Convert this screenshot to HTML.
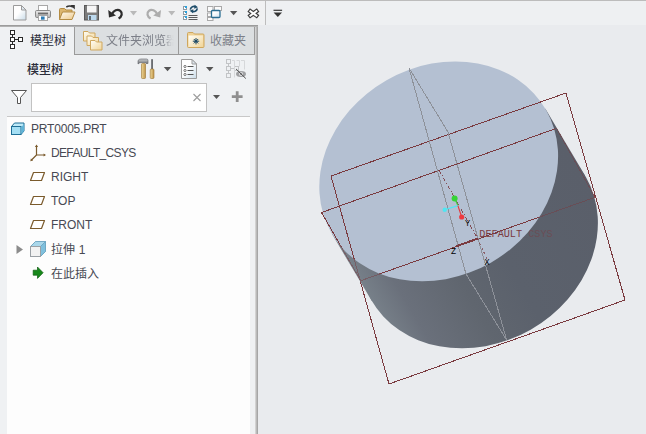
<!DOCTYPE html>
<html lang="zh-CN">
<head>
<meta charset="utf-8">
<title>PRT0005</title>
<style>
html,body{margin:0;padding:0;}
body{width:646px;height:434px;overflow:hidden;background:#e9ebee;font-family:"Liberation Sans","Noto Sans CJK SC",sans-serif;}
#app{position:relative;width:646px;height:434px;overflow:hidden;background:#e9ebee;}
.abs{position:absolute;}
#topline{left:0;top:0;width:646px;height:1px;background:#bcbcbc;}
#toolbar{left:0;top:1px;width:265px;height:24px;background:#f0f1f2;}
#tbsep{left:265px;top:1px;width:1px;height:24px;background:#bdbdbd;}
#tbright{left:266px;top:1px;width:380px;height:24px;background:#eef0f2;}
#panel{left:0;top:25px;width:258px;height:409px;background:#eff1f3;}
#paneltop{left:0;top:25px;width:258px;height:2px;background:linear-gradient(#9c9c9c 0 1px,#b2b2b2 1px 2px);}
#tab1{left:0;top:27px;width:74px;height:28px;background:#eff1f3;}
.tabi{top:27px;height:27px;background:#dcdfe1;border-left:1px solid #9a9a9a;border-bottom:1px solid #9a9a9a;}
#tab2{left:74px;width:103px;}
#tab3{left:178px;width:75px;}
#split1{left:254px;top:27px;width:1px;height:28px;background:#9c9c9c;}
#split2{left:255px;top:27px;width:2px;height:407px;background:linear-gradient(to right,#d2d2d2 0 1px,#bababa 1px 2px);}
#split3{left:257px;top:27px;width:1px;height:407px;background:#a6a6a6;}
.tabtxt{font-size:12px;line-height:16px;white-space:nowrap;}
#search{left:31px;top:83px;width:174px;height:27px;background:#fff;border:1px solid #c2c2c2;}
#tree{left:7px;top:116px;width:243px;height:318px;background:#fdfdfd;border-top:1px solid #c8c8c8;}
.row{position:absolute;left:0;height:24px;font-size:12px;line-height:24px;color:#474953;white-space:nowrap;}
svg{position:absolute;overflow:visible;}
</style>
</head>
<body>
<div id="app">
  <div id="tbright" class="abs"></div>
  <div id="toolbar" class="abs"></div>
  <div id="topline" class="abs"></div>
  <div id="tbsep" class="abs"></div>
  <div id="panel" class="abs"></div>
  <div id="paneltop" class="abs"></div>
  <div id="tab1" class="abs"></div>
  <div id="tab2" class="abs tabi"></div>
  <div id="tab3" class="abs tabi"></div>
  <div id="split1" class="abs"></div>
  <div id="split2" class="abs"></div>
  <div id="split3" class="abs"></div>
  <div class="abs tabtxt" style="left:30px;top:33px;color:#2b2d3a;">模型树</div>
  <div class="abs tabtxt" style="left:106px;top:33px;color:#7c7f88;width:68px;overflow:hidden;-webkit-mask-image:linear-gradient(to right,#000 60px,rgba(0,0,0,0.25) 63px,transparent 68px);mask-image:linear-gradient(to right,#000 60px,rgba(0,0,0,0.25) 63px,transparent 68px);">文件夹浏览器</div>
  <div class="abs tabtxt" style="left:210px;top:33px;color:#7c7f88;">收藏夹</div>
  <div class="abs tabtxt" style="left:27px;top:62px;color:#2b2d3a;font-weight:500;font-size:12px;">模型树</div>
  <div id="search" class="abs"></div>
  <div id="tree" class="abs"></div>
  <div class="row" style="left:31px;top:117px;letter-spacing:-0.2px;">PRT0005.PRT</div>
  <div class="row" style="left:51px;top:141px;letter-spacing:-0.65px;">DEFAULT_CSYS</div>
  <div class="row" style="left:51px;top:165px;">RIGHT</div>
  <div class="row" style="left:51px;top:189px;">TOP</div>
  <div class="row" style="left:51px;top:213px;">FRONT</div>
  <div class="row" style="left:51px;top:238px;word-spacing:0.5px;">拉伸 1</div>
  <div class="row" style="left:51px;top:262px;">在此插入</div>

  <!-- icons overlay -->
  <svg id="icons" class="abs" style="left:0;top:0;" width="646" height="434" viewBox="0 0 646 434">
    <defs>
      <linearGradient id="gdoc" x1="0" y1="0" x2="1" y2="1"><stop offset="0.45" stop-color="#ffffff"/><stop offset="1" stop-color="#c9dbe8"/></linearGradient>
      <linearGradient id="gprn" x1="0" y1="0" x2="0" y2="1"><stop offset="0" stop-color="#ececec"/><stop offset="1" stop-color="#b4b4b4"/></linearGradient>
      <linearGradient id="gfold" x1="0" y1="0" x2="1" y2="1"><stop offset="0" stop-color="#fffaf0"/><stop offset="1" stop-color="#ecc98a"/></linearGradient>
      <linearGradient id="gwood" x1="0" y1="0" x2="1" y2="0"><stop offset="0" stop-color="#ecd596"/><stop offset="1" stop-color="#c0964a"/></linearGradient>
      <linearGradient id="gsteel" x1="0" y1="0" x2="0" y2="1"><stop offset="0" stop-color="#c9cbce"/><stop offset="1" stop-color="#6f7276"/></linearGradient>
      <linearGradient id="gfold2" x1="0" y1="0" x2="1" y2="1"><stop offset="0" stop-color="#fffef8"/><stop offset="1" stop-color="#f1d598"/></linearGradient>
      <linearGradient id="gwin" x1="0" y1="0" x2="1" y2="1"><stop offset="0.35" stop-color="#ffffff"/><stop offset="1" stop-color="#cfe3f0"/></linearGradient>
    </defs>
    <!-- new -->
    <path d="M13.5,5.5 h8 l4.5,4.5 v10 h-12.5 z" fill="url(#gdoc)" stroke="#9b9b9b"/>
    <path d="M21.5,5.5 v4.5 h4.5 z" fill="#dfe8ef" stroke="#9b9b9b" stroke-linejoin="round"/>
    <!-- print -->
    <rect x="38.5" y="5.5" width="9" height="6" fill="#fff" stroke="#a8a8a8"/>
    <rect x="35.5" y="10.5" width="15" height="7" rx="1.2" fill="url(#gprn)" stroke="#8a8a8a"/>
    <rect x="38" y="12.6" width="10" height="1.8" fill="#6c6c6c"/>
    <rect x="38.5" y="15.5" width="9" height="5" fill="#fff" stroke="#a8a8a8"/>
    <rect x="41" y="16.5" width="3.6" height="3.2" fill="#2d7db6"/>
    <!-- open -->
    <path d="M59.5,19.5 v-10 q0,-1 1,-1 h4 l1.5,1.5 h6 v2.5 h-9.5 z" fill="#dcb66f" stroke="#b48c44"/>
    <path d="M59.5,19.5 l3,-7.5 h12.5 l-3,7.5 z" fill="url(#gfold)" stroke="#b48c44" stroke-linejoin="round"/>
    <path d="M66.3,7 q3.5,-2 6.6,0.2" fill="none" stroke="#333" stroke-width="1.6"/>
    <path d="M70.4,4.9 h4.4 v4.6 z" fill="#333"/>
    <!-- save -->
    <rect x="84.5" y="5.5" width="14" height="14.5" fill="#7b7b7b" stroke="#595959"/>
    <rect x="87" y="5.5" width="9.5" height="7" fill="#f6f6f6"/>
    <rect x="88" y="15" width="8.5" height="5" fill="#bcd9ee"/>
    <rect x="89" y="16" width="2" height="4" fill="#5f6b75"/>
    <!-- undo -->
    <path d="M112,14.2 C113.5,10.5 117.5,8.6 120.3,10.8 C122.8,12.8 122,16.5 118.6,18.4" fill="none" stroke="#2d2d2d" stroke-width="2.3"/>
    <path d="M108.2,9.9 L109,17.4 L116,15.6 z" fill="#2d2d2d"/>
    <path d="M130,11 h7 l-3.5,4.5 z" fill="#b9b9b9"/>
    <!-- redo -->
    <path d="M157.2,14.2 C155.7,10.5 151.7,8.6 148.9,10.8 C146.4,12.8 147.2,16.5 150.6,18.4" fill="none" stroke="#adadad" stroke-width="2.3"/>
    <path d="M161,9.9 L160.2,17.4 L153.2,15.6 z" fill="#adadad"/>
    <path d="M168.2,11 h7 l-3.5,4.5 z" fill="#b9b9b9"/>
    <!-- regenerate -->
    <g fill="#fff" stroke="#8d9aa3">
      <rect x="183.5" y="6.5" width="3" height="3"/><rect x="183.5" y="11.5" width="3" height="3"/><rect x="183.5" y="16.5" width="3" height="3"/>
    </g>
    <g fill="#29a3e0"><rect x="185" y="6" width="2" height="2"/><rect x="185" y="11" width="2" height="2"/><rect x="185" y="16" width="2" height="2"/></g>
    <g fill="none" stroke="#1f4e6b" stroke-width="1.6">
      <path d="M190.3,9.6 a3.6,3.6 0 0 1 5.6,-2.6"/>
      <path d="M197.3,8.4 a3.6,3.6 0 0 1 -5.6,2.6"/>
    </g>
    <path d="M194.6,4.8 l3.4,2.4 l-3.8,1.6 z" fill="#1f4e6b"/>
    <path d="M193,13.2 l-3.4,-2.4 l3.8,-1.6 z" fill="#1f4e6b"/>
    <g stroke="#5a5a5a" stroke-width="1"><line x1="188.5" y1="15.5" x2="197.5" y2="15.5"/><line x1="188.5" y1="17.5" x2="197.5" y2="17.5"/><line x1="188.5" y1="19.5" x2="197.5" y2="19.5"/></g>
    <!-- windows -->
    <g fill="#fbfbfb" stroke="#a9a9a9">
      <rect x="207.5" y="6.5" width="5.5" height="5"/><rect x="214.5" y="6.5" width="7" height="4"/>
      <rect x="207.5" y="13" width="5.5" height="3.5"/><rect x="207.5" y="17.5" width="5.5" height="3"/>
    </g>
    <rect x="211.5" y="10.5" width="8.5" height="7" rx="1" fill="url(#gwin)" stroke="#2c6f93" stroke-width="1.3"/>
    <path d="M230,11 h7.3 l-3.65,4.2 z" fill="#555"/>
    <!-- close X -->
    <g fill="none" stroke-linecap="square">
      <path d="M250.4,11.2 L256.4,15.6 M256.4,11.2 L250.4,15.600" stroke="#3a3a3a" stroke-width="4.300"/>
      <path d="M250.4,11.2 L256.4,15.6 M256.4,11.2 L250.4,15.600" stroke="#fdfdfd" stroke-width="2"/>
    </g>
    <!-- customize -->
    <rect x="273.500" y="9.700" width="8.600" height="1.200" fill="#3a3a3a"/>
    <path d="M273.600,12.500 h8.400 l-4.200,4.600 z" fill="#333"/>

    <!-- tab1 tree icon -->
    <g fill="#fff" stroke="#2a2a2a">
      <path d="M12.5,34 v4 M12.5,41 v4 M14.5,39.5 h4" fill="none"/>
      <rect x="10.5" y="30.5" width="4" height="4"/><rect x="10.5" y="37.5" width="4" height="4"/><rect x="10.5" y="44.5" width="4" height="4"/><rect x="18.5" y="37.5" width="4" height="4"/>
    </g>
    <!-- tab2 folders -->
    <g fill="url(#gfold2)" stroke="#cfa75e">
      <path d="M83.500,31.500 h4.500 l1.500,1.500 h5.500 v8 h-11.500 z" transform="translate(0,0)"/>
      <path d="M83.500,31.500 h4.500 l1.500,1.500 h5.500 v8 h-11.500 z" transform="translate(3.500,4.500)"/>
      <path d="M83.500,31.500 h4.500 l1.500,1.500 h5.500 v8 h-11.500 z" transform="translate(7,9)"/>
    </g>
    <!-- tab3 fav folder -->
    <path d="M187.500,33.500 q0,-1 1,-1 h4.500 l1.500,1.500 h8.500 q1,0 1,1 v11.500 q0,1 -1,1 h-14.500 q-1,0 -1,-1 z" fill="#efd296" stroke="#cfa75e"/>
    <rect x="188.500" y="35.500" width="14.500" height="11.500" fill="url(#gfold2)"/>
    <g stroke="#1d4a66" stroke-width="1"><line x1="196" y1="38" x2="196" y2="44.4"/><line x1="192.800" y1="41.200" x2="199.200" y2="41.200"/><line x1="193.800" y1="39" x2="198.200" y2="43.400"/><line x1="198.200" y1="39" x2="193.800" y2="43.400"/></g>
    <circle cx="196" cy="41.200" r="1.300" fill="#1d4a66"/>

    <!-- hammer / screwdriver -->
    <path d="M138,60.500 q1,-1.500 3,-1.500 h5.500 q1.500,0 1.500,1.500 v3 h-2 v-1 h-5 q-1.500,0 -3,1.500 z" fill="url(#gsteel)" stroke="#5d6064" stroke-width="0.600"/>
    <rect x="141.500" y="63.500" width="4" height="15" rx="0.800" fill="url(#gwood)" stroke="#9a7430" stroke-width="0.600"/>
    <rect x="151.300" y="59.200" width="1.500" height="10.500" fill="#4a4d52"/>
    <rect x="150.200" y="69" width="3.800" height="9.500" rx="1" fill="url(#gwood)" stroke="#9a7430" stroke-width="0.600"/>
    <path d="M163.800,67 h7.500 l-3.750,4.200 z" fill="#555"/>
    <!-- list doc -->
    <path d="M181.500,59.500 h10.500 l4.500,4.500 v14.500 h-15 z" fill="url(#gdoc)" stroke="#9b9b9b"/>
    <path d="M192,59.500 v4.500 h4.500 z" fill="#dfe8ef" stroke="#9b9b9b" stroke-linejoin="round"/>
    <g fill="#fff" stroke="#555" stroke-width="0.800"><circle cx="185" cy="66.5" r="1.100"/><circle cx="185" cy="70.5" r="1.100"/><circle cx="185" cy="74.5" r="1.100"/></g>
    <g stroke="#555" stroke-width="1"><line x1="187.500" y1="66.5" x2="193.500" y2="66.5"/><line x1="187.500" y1="70.5" x2="193.500" y2="70.5"/><line x1="187.500" y1="74.5" x2="193.500" y2="74.5"/></g>
    <path d="M206,67 h7.500 l-3.750,4.200 z" fill="#555"/>
    <!-- tree hide (disabled) -->
    <g fill="none" stroke="#c2c4c6">
      <path d="M228.500,63.500 v3 M228.500,70.500 v3.500 M230.500,68.500 h4"/>
      <rect x="226.500" y="59.500" width="4" height="4"/><rect x="226.500" y="66.500" width="4" height="4"/><rect x="226.500" y="73.500" width="4" height="4"/>
      <rect x="234.500" y="66.500" width="4" height="4"/>
    </g>
    <g fill="none" stroke="#d6d8da">
      <path d="M232,60.500 h2.500 v17 M236.500,60.500 h3 v6 M241,60.500 h3.500 v9"/>
    </g>
    <ellipse cx="241" cy="74" rx="5" ry="2.900" fill="#a0a1a3"/>
    <circle cx="241" cy="74" r="1.700" fill="none" stroke="#e4e5e7" stroke-width="0.800"/>
    <line x1="236" y1="68.900" x2="245.800" y2="78.500" stroke="#3c3c3c" stroke-width="0.900"/>

    <!-- funnel -->
    <path d="M11.500,90.500 h15 l-6,7 v6 h-3 v-6 z" fill="#fff" stroke="#555" stroke-linejoin="round"/>
    <!-- clear x -->
    <path d="M193.500,94 l7,7 M200.500,94 l-7,7" stroke="#9d9d9d" stroke-width="1.100" fill="none"/>
    <path d="M213,95 h7 l-3.500,4 z" fill="#555"/>
    <path d="M237.200,91.300 v10.700 M231.800,96.650 h10.800" stroke="#8f8f8f" stroke-width="2.800" fill="none"/>

    <!-- tree icons -->
    <!-- part -->
    <path d="M11.500,126.500 l3,-3.500 h9.500 v8 l-3,3.500 h-9.500 z" fill="#bfeaf8" stroke="#1f6f96" stroke-linejoin="round"/>
    <rect x="11.5" y="126.5" width="9.5" height="8" fill="#a4dff4" stroke="#1f6f96"/>
    <path d="M21.500,127 l2.500,-3 v7 l-2.500,3 z" fill="#5fb4d8"/>
    <!-- csys -->
    <g stroke="#7a5a2c" fill="none" stroke-width="1.200">
      <path d="M36.500,146 v9 h8 M36.500,155 l-5,5"/>
    </g>
    <path d="M36.500,144.600 l1.600,2.400 h-3.200 z M46,155 l-2.400,1.600 v-3.200 z M30.300,161.200 l0.600,-2.800 l2.200,2.200 z" fill="#7a5a2c"/>
    <!-- planes -->
    <g fill="#fff" stroke="#7a5a2c" stroke-width="1.200" stroke-linejoin="round">
      <path d="M33.500,172.500 h11 l-3,8 h-11 z"/>
      <path d="M33.500,196.500 h11 l-3,8 h-11 z"/>
      <path d="M33.500,220.500 h11 l-3,8 h-11 z"/>
    </g>
    <!-- expand arrow -->
    <path d="M16.500,245 l6.500,4.500 l-6.500,4.500 z" fill="#8c8c8c"/>
    <!-- extrude -->
    <path d="M30.500,246.500 l5,-5 h10 v10 l-5,5 h-10 z" fill="#c4e3f0" stroke="#9aa0a5" stroke-linejoin="round"/>
    <path d="M35.500,241.500 h10 l-5,5 h-10 z" fill="#a9d7ea" stroke="#6aa6c4" stroke-width="0.800"/>
    <path d="M40.500,246.500 l5,-5 v10 l-5,5 z" fill="#7fc0dd" stroke="#6aa6c4" stroke-width="0.800"/>
    <rect x="30.500" y="246.500" width="10" height="10" fill="#f2f2f2" stroke="#9aa0a5"/>
    <!-- insert arrow -->
    <path d="M33.200,270.200 h4.300 v-3.200 l5.600,5.700 l-5.600,5.700 v-3.200 h-4.300 z" fill="#17881a" stroke="#0c5c0e" stroke-width="0.700" stroke-linejoin="round"/>
  </svg>

  <!-- 3D model -->
  <svg id="model" class="abs" style="left:258px;top:27px;" width="388" height="407" viewBox="258 27 388 407">
    <defs>
      <linearGradient id="sideg" gradientUnits="userSpaceOnUse" x1="351.3" y1="266.8" x2="564.6" y2="141.3">
        <stop offset="0" stop-color="#778089"/>
        <stop offset="0.12" stop-color="#6a707b"/>
        <stop offset="0.35" stop-color="#60666f"/>
        <stop offset="0.55" stop-color="#5b616c"/>
        <stop offset="1" stop-color="#5a5f6a"/>
      </linearGradient>
    </defs>
    <g fill="url(#sideg)">
      <path d="M585.91,177.01 A123.72,105.09 -29.75 0 1 530.65,329.64 A123.72,105.09 -29.75 0 1 371.09,299.79 A123.72,105.09 -29.75 0 1 426.35,147.16 A123.72,105.09 -29.75 0 1 585.91,177.01 Z"/>
      <polygon points="332.04,234.09 545.36,108.71 585.16,175.71 371.84,301.09"/>
    </g>
    <path d="M546.11,110.01 A123.72,105.09 -29.75 0 1 490.85,262.64 A123.72,105.09 -29.75 0 1 331.29,232.79 A123.72,105.09 -29.75 0 1 386.55,80.16 A123.72,105.09 -29.75 0 1 546.11,110.01 Z" fill="#b4c0d2"/>
    <mask id="vis" maskUnits="userSpaceOnUse" x="258" y="27" width="388" height="407">
      <rect x="258" y="27" width="388" height="407" fill="#fff"/>
      <g fill="#000">
        <path d="M585.91,177.01 A123.72,105.09 -29.75 0 1 530.65,329.64 A123.72,105.09 -29.75 0 1 371.09,299.79 A123.72,105.09 -29.75 0 1 426.35,147.16 A123.72,105.09 -29.75 0 1 585.91,177.01 Z"/>
        <polygon points="332.04,234.09 545.36,108.71 585.16,175.71 371.84,301.09"/>
      </g>
      <path d="M546.11,110.01 A123.72,105.09 -29.75 0 1 490.85,262.64 A123.72,105.09 -29.75 0 1 331.29,232.79 A123.72,105.09 -29.75 0 1 386.55,80.16 A123.72,105.09 -29.75 0 1 546.11,110.01 Z" fill="#fff"/>
    </mask>
    <g id="wires" fill="none" stroke="#7a3a3f" stroke-width="1" opacity="0.45" shape-rendering="crispEdges">
      <polygon points="331,176 566,93 625,300 389,384"/>
      <polygon points="360.7,280.7 321.5,212.5 556.5,128.3 595,197.3"/>
    </g>
    <g fill="none" stroke="#7a3a3f" stroke-width="1" mask="url(#vis)" shape-rendering="crispEdges">
      <polygon points="331,176 566,93 625,300 389,384"/>
      <polygon points="360.7,280.7 321.5,212.5 556.5,128.3 595,197.3"/>
    </g>
    <polygon points="409,68 448,132 506.6,340 466,274" fill="none" stroke="#8d9199" stroke-width="1" shape-rendering="crispEdges"/>
    <g stroke="#7a3a3f" fill="none" shape-rendering="crispEdges">
      <line x1="439" y1="170" x2="477.7" y2="238.6" stroke-dasharray="4 2 1 2" opacity="0.85"/>
      <line x1="477.7" y1="238.6" x2="456.6" y2="246.2" stroke-width="2"/>
      <line x1="477.7" y1="238.6" x2="487" y2="259" stroke-dasharray="2 3" opacity="0.7"/>
    </g>
    <g stroke-width="1.1" fill="none">
      <line x1="457.9" y1="205.6" x2="454.6" y2="198.5" stroke="#3fd13f"/>
      <line x1="457.9" y1="205.6" x2="444.7" y2="209.7" stroke="#4fe6f2"/>
      <line x1="457.9" y1="205.6" x2="461.7" y2="217" stroke="#e8343a"/>
    </g>
    <circle cx="454.6" cy="198.5" r="3" fill="#35d435"/>
    <circle cx="444.7" cy="209.7" r="2.2" fill="#4fe6f2"/>
    <circle cx="461.7" cy="217" r="2.6" fill="#ee3a40"/>
    <g font-family="'Liberation Mono',monospace" font-size="8.5" fill="#000">
      <text x="465" y="226">Y</text>
      <text x="451" y="254">Z</text>
      <text x="484.5" y="265">X</text>
    </g>
    <text x="479.3" y="236.8" textLength="73.4" lengthAdjust="spacingAndGlyphs" font-family="'Liberation Mono',monospace" font-size="11" fill="#7a3a3f">DEFAULT<tspan fill-opacity="0.15">_</tspan><tspan fill-opacity="0.5">CSYS</tspan></text>
  </svg>
</div>
</body>
</html>
